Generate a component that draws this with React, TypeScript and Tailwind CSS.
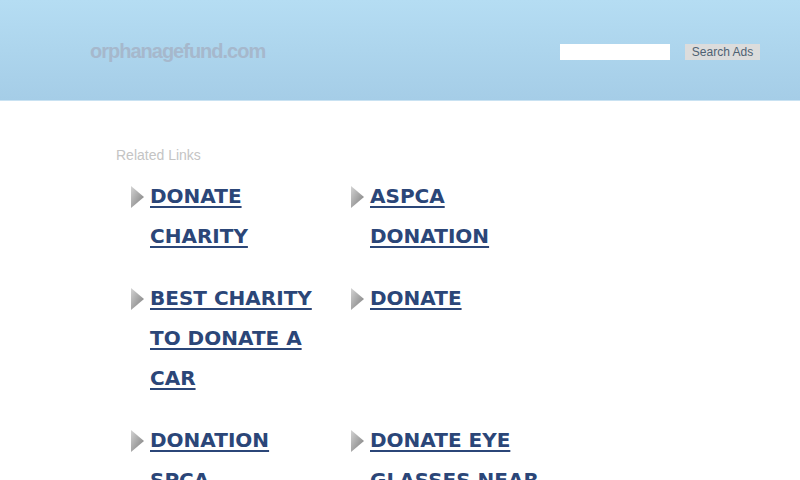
const links: string[] = [
  'DONATE CHARITY',
  'ASPCA DONATION',
  'BEST CHARITY TO DONATE A CAR',
  'DONATE',
  'DONATION SPCA',
  'DONATE EYE GLASSES NEAR ME',
];

function Arrow() {
  return (
    <svg width="13" height="22" viewBox="0 0 13 22" className="shrink-0 mt-[10px]">
      <defs>
        <linearGradient id="arrowShade" x1="0" y1="0" x2="1" y2="1">
          <stop offset="0" stopColor="#d4d4d4" />
          <stop offset="1" stopColor="#7a7a7a" />
        </linearGradient>
      </defs>
      <polygon points="0,0 13,11 0,22" fill="url(#arrowShade)" />
    </svg>
  );
}

export default function App() {
  return (
    <div className="w-[800px] h-[480px] overflow-hidden bg-white font-['Liberation_Sans',Arial,sans-serif]">
      {/* Header */}
      <div className="h-[101px] bg-gradient-to-b from-[#b5ddf3] to-[#a5cde7] border-b border-[#c9e2f2] flex items-center">
        <div className="pl-[90px] w-[560px] pt-[2px]">
          <span className="text-[20px] font-bold tracking-[-1px] text-[#a6b8cc]">orphanagefund.com</span>
        </div>
        <div className="flex items-center gap-[15px] pt-[4px]">
          <input type="text" className="w-[110px] h-[16px] bg-white border-0 outline-none" />
          <button className="h-[16px] w-[75px] bg-[#dcdcdc] text-[12px] leading-[16px] text-[#4e6172]">
            Search Ads
          </button>
        </div>
      </div>

      {/* Related links */}
      <div className="pl-[116px] pt-[46px]">
        <div className="text-[14px] leading-[16px] text-[#c4c4c4]">Related Links</div>
        <div className="grid grid-cols-[220px_220px] pl-[15px] pt-[13px] gap-y-[22px]">
          {links.map((t) => (
            <div key={t} className="flex gap-[6px]">
              <Arrow />
              <a
                href="#"
                className="w-[172px] text-[20px] leading-[40px] font-bold text-[#2b4678] underline decoration-2 underline-offset-[3px] font-['DejaVu_Sans',Verdana,sans-serif]"
              >
                {t}
              </a>
            </div>
          ))}
        </div>
      </div>
    </div>
  );
}
